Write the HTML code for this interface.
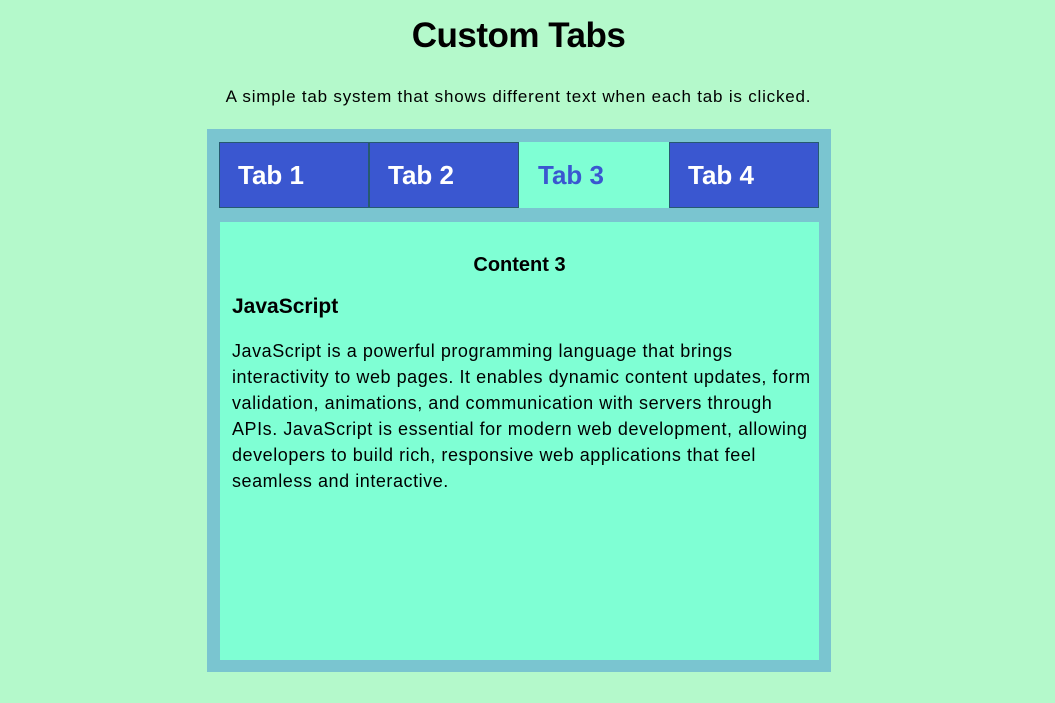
<!DOCTYPE html>
<html><head><style>
body{margin:0;background:#b4f9cb;font-family:"Liberation Sans",sans-serif;width:1055px;height:703px;overflow:hidden}
h1{margin:0;position:absolute;top:16px;left:-9px;width:1055px;text-align:center;font-size:35px;font-weight:bold;letter-spacing:-0.5px}
p.sub{position:absolute;top:87px;left:-9px;width:1055px;margin:0;text-align:center;font-size:17px;letter-spacing:0.8px}
.box{position:absolute;left:207px;top:129px;width:624px;height:543px;background:#7ac5d0}
.tab{position:absolute;top:13px;height:64px;width:148px;background:#3a57d0;border:1px solid #265a70;color:#fff;font-weight:bold;font-size:26px;line-height:64px;box-sizing:content-box}
.tab span{margin-left:18px}
.act{background:#7fffd4;color:#3a57d0;border-color:#7fffd4}
.content{position:absolute;left:13px;top:93px;width:599px;height:438px;background:#7fffd4}
.content h3{margin:0;position:absolute;top:32px;width:100%;text-align:center;font-size:20px}
.content h2{margin:0;position:absolute;top:73px;left:12px;font-size:21px}
.content p{margin:0;position:absolute;top:116px;left:12px;width:600px;font-size:18px;letter-spacing:0.55px;line-height:26px;white-space:nowrap}
</style></head><body>
<h1>Custom Tabs</h1>
<p class="sub">A simple tab system that shows different text when each tab is clicked.</p>
<div class="box">
<div class="tab" style="left:12px"><span>Tab 1</span></div>
<div class="tab" style="left:162px"><span>Tab 2</span></div>
<div class="tab act" style="left:312px"><span>Tab 3</span></div>
<div class="tab" style="left:462px"><span>Tab 4</span></div>
<div class="content">
<h3>Content 3</h3>
<h2>JavaScript</h2>
<p>JavaScript is a powerful programming language that brings<br>interactivity to web pages. It enables dynamic content updates, form<br>validation, animations, and communication with servers through<br>APIs. JavaScript is essential for modern web development, allowing<br>developers to build rich, responsive web applications that feel<br>seamless and interactive.</p>
</div>
</div>
</body></html>
